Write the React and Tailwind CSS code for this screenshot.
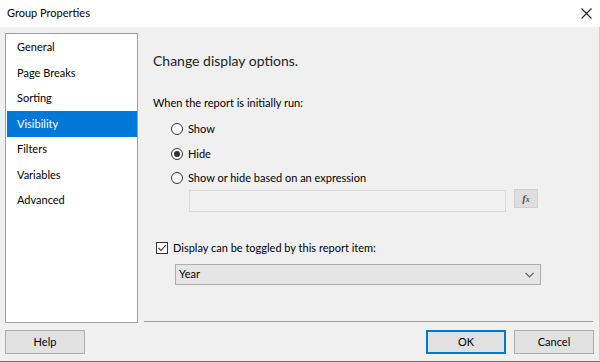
import React from "react";

const items = ["General", "Page Breaks", "Sorting", "Visibility", "Filters", "Variables", "Advanced"];

function Radio({ checked, label, className }) {
  return (
    <div className={"flex items-center h-[16px] " + className}>
      <div className="w-[12px] h-[12px] rounded-full border border-[#333333] bg-white flex items-center justify-center">
        {checked && <div className="w-[6px] h-[6px] rounded-full bg-[#333333]" />}
      </div>
      <span className="ml-[5px] text-[11px] leading-[16px] text-black">{label}</span>
    </div>
  );
}

function Btn({ children, primary, className }) {
  return (
    <div
      className={
        "w-[80px] h-[24px] flex items-center justify-center bg-[#e1e1e1] text-[11px] text-black border " +
        (primary ? "border-[#0078d7] border-2" : "border-[#adadad]") +
        " " +
        (className || "")
      }
    >
      {children}
    </div>
  );
}

export default function App() {
  return (
    <div
      className="w-[600px] h-[362px] flex flex-col overflow-hidden"
      style={{ fontFamily: 'Lato, "Noto Sans", sans-serif' }}
    >
      <div className="h-[27px] bg-white flex items-center justify-between pl-[7px] pr-[8px]">
        <span className="text-[11px] text-black">Group Properties</span>
        <svg width="11" height="11" viewBox="0 0 11 11">
          <path d="M0.5 0.5 L10.5 10.5 M10.5 0.5 L0.5 10.5" stroke="#222" strokeWidth="1.1" />
        </svg>
      </div>
      <div className="flex-1 bg-[#f0f0f0] flex flex-col border-b border-[#6e6e6e] border-r border-r-[#cfcfcf]">
        <div className="flex pt-[6px]">
          <div className="ml-[5px] w-[133px] h-[290px] bg-white border border-[#a0a0a0] pt-[0.5px]">
            {items.map((it) => (
              <div
                key={it}
                className={
                  "h-[25.5px] ml-[1px] pl-[10px] flex items-center text-[11px] " +
                  (it === "Visibility" ? "bg-[#0078d7] text-white" : "text-black")
                }
              >
                {it}
              </div>
            ))}
          </div>
          <div className="ml-[6px] mr-[6px] flex-1 mb-[1px] border-b border-[#a0a0a0] flex flex-col">
            <div className="mt-[18px] h-[20px] pl-[9px] text-[14px] leading-[20px] text-[#222]">
              Change display options.
            </div>
            <div className="mt-[24px] h-[16px] pl-[9px] text-[11px] leading-[16px] text-black">
              When the report is initially run:
            </div>
            <Radio className="mt-[10px] ml-[27px]" label="Show" />
            <Radio className="mt-[9px] ml-[27px]" label="Hide" checked />
            <Radio className="mt-[8px] ml-[27px]" label="Show or hide based on an expression" />
            <div className="mt-[3px] ml-[45px] flex items-start">
              <div className="mt-[1px] w-[317px] h-[22px] border border-[#d9d9d9] bg-[#f0f0f0]" />
              <div className="ml-[8px] w-[24px] h-[19px] bg-[#dedede] border border-[#d0d0d0] flex items-center justify-center text-[#555] text-[11px] italic font-bold" style={{ fontFamily: '"Liberation Serif", serif' }}>
                f<span className="text-[8px] mt-[3px]">x</span>
              </div>
            </div>
            <div className="mt-[28px] ml-[12px] flex items-center h-[16px]">
              <div className="w-[12px] h-[12px] border border-[#333333] bg-white flex items-center justify-center">
                <svg width="10" height="10" viewBox="0 0 10 10">
                  <path d="M1.5 5 L4 7.5 L8.8 2.2" stroke="#333" strokeWidth="1.1" fill="none" />
                </svg>
              </div>
              <span className="ml-[5px] text-[11px] leading-[16px] text-black">Display can be toggled by this report item:</span>
            </div>
            <div className="mt-[8px] ml-[31px] w-[366px] h-[21px] bg-[#e5e5e5] border border-[#acacac] flex items-center justify-between pl-[3px] pr-[6px]">
              <span className="text-[11px] text-black">Year</span>
              <svg width="9" height="6" viewBox="0 0 9 6">
                <path d="M0.5 0.8 L4.5 4.8 L8.5 0.8" stroke="#606060" strokeWidth="1.2" fill="none" />
              </svg>
            </div>
          </div>
        </div>
        <div className="mt-[7px] flex items-center">
          <Btn className="ml-[5px]">Help</Btn>
          <div className="flex-1" />
          <Btn primary>OK</Btn>
          <Btn className="ml-[8px] mr-[5px]">Cancel</Btn>
        </div>
      </div>
    </div>
  );
}
